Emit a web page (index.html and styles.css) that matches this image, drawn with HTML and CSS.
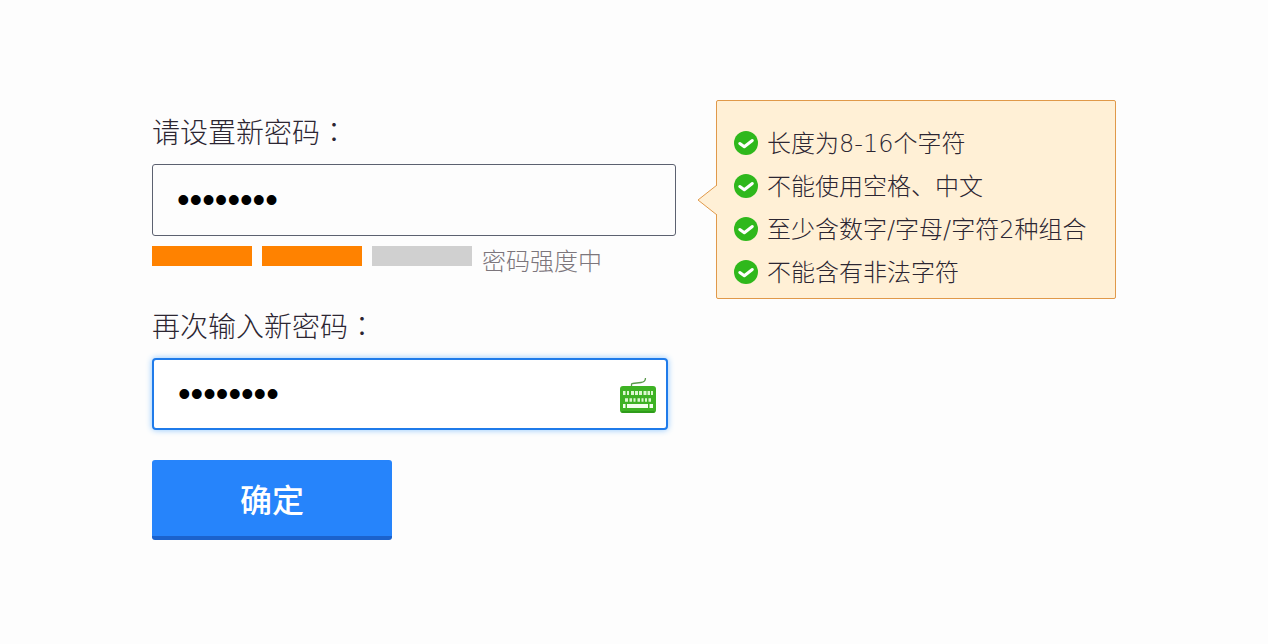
FILE: index.html
```html
<!DOCTYPE html>
<html lang="zh-CN">
<head>
    <meta charset="UTF-8">
    <meta name="viewport" content="width=device-width, initial-scale=1.0">
    <title>设置新密码</title>
    <link rel="stylesheet" href="styles.css">
</head>
<body>
    <!-- 对勾图标 -->
    <svg class="icon-defs" width="0" height="0" aria-hidden="true">
        <symbol id="check" viewBox="0 0 24 24">
            <circle cx="12" cy="12" r="12" fill="#2fb81c"/>
            <path d="M5.800 12.500L10.300 15.800L18.300 9.500" fill="none" stroke="#fff" stroke-width="3" stroke-linecap="round" stroke-linejoin="round"/>
        </symbol>
    </svg>
    <div class="container">
        <form class="password-form" id="passwordForm">
            <!-- 新密码 -->
            <div class="form-group">
                <label for="password">请设置新密码<span class="colon" lang="zh-TW">：</span></label>
                <input type="password" id="password" name="password" value="abcd1234">
                <div class="strength">
                    <span class="bar active"></span>
                    <span class="bar active"></span>
                    <span class="bar"></span>
                    <span class="strength-text">密码强度中</span>
                </div>
            </div>
            <!-- 确认密码 -->
            <div class="form-group">
                <label for="confirm">再次输入新密码<span class="colon" lang="zh-TW">：</span></label>
                <div class="input-box">
                    <input type="password" id="confirm" name="confirm" value="abcd1234">
                    <svg class="keyboard" viewBox="0 0 36 40" aria-hidden="true">
                        <path d="M11.500 13V10.500Q11.500 9.500 12.500 9.500L21 8.500Q25.500 8 25.500 4" fill="none" stroke="#5a9a4c" stroke-width="1.300"/>
                        <rect x="0" y="12" width="36" height="27" rx="3" fill="#3eb224"/>
                        <path d="M1.500 38h33" stroke="#2b9518" stroke-width="1.500"/>
                        <path d="M3 19h2.500M7 19h2M11 19h3M15 19h3M19 19h3M23.500 19h3M27.500 19h2.500M31 19h2" stroke="#dcf7cf" stroke-width="4"/>
                        <path d="M5 26h3M9.500 26h2.500M13.500 26h2M17.500 26h2.500M21.500 26h2M25 26h2M28.500 26h2.500" stroke="#dcf7cf" stroke-width="3.500"/>
                        <path d="M3 32h2.500M7 32h21M29.500 32h3.500" stroke="#f2ffec" stroke-width="4"/>
                    </svg>
                </div>
            </div>
            <button type="submit">确定</button>
        </form>
        <!-- 密码规则提示 -->
        <div class="tip">
            <svg class="arrow" viewBox="0 0 20 32" aria-hidden="true">
                <path d="M20 1L1 16L20 31" fill="#fff0d6" stroke="#e0994a"/>
            </svg>
            <ul>
                <li><svg class="check" aria-hidden="true"><use href="#check"/></svg>长度为8-16个字符</li>
                <li><svg class="check" aria-hidden="true"><use href="#check"/></svg>不能使用空格、中文</li>
                <li><svg class="check" aria-hidden="true"><use href="#check"/></svg>至少含数字/字母/字符2种组合</li>
                <li><svg class="check" aria-hidden="true"><use href="#check"/></svg>不能含有非法字符</li>
            </ul>
        </div>
    </div>
</body>
</html>
```
FILE: styles.css
```css
* {
    box-sizing: border-box;
}
body {
    margin: 0;
    background-color: #fdfdfd;
    color: #2c2632;
    font-family: "Noto Sans CJK SC", sans-serif;
    font-weight: 300;
}
.icon-defs {
    position: absolute;
}
.container {
    display: flex;
    align-items: flex-start;
    gap: 40px;
    padding: 100px 152px;
}
.password-form {
    flex: 0 1 524px;
    padding-top: 12px;
}
.form-group {
    margin-bottom: 30px;
}
.form-group label {
    display: block;
    margin-bottom: 14px;
    font-size: 28px;
    line-height: 38px;
}
.colon {
    font-family: "Noto Sans CJK TC", sans-serif;
}
.form-group input {
    display: block;
    width: 100%;
    height: 72px;
    padding: 0 24px;
    border: 1px solid #5c6170;
    border-radius: 3px;
    background-color: #fdfdfd;
    color: #000;
    font-family: "Liberation Sans", sans-serif;
    font-size: 36px;
    outline: none;
}
.strength {
    display: flex;
    gap: 10px;
    height: 30px;
    margin-top: 10px;
}
.strength .bar {
    width: 100px;
    height: 20px;
    background-color: #d0d0d0;
}
.strength .bar.active {
    background-color: #ff8200;
}
.strength-text {
    color: #7c767c;
    font-size: 24px;
    line-height: 28px;
}
.input-box {
    display: flex;
    align-items: center;
    margin-right: 8px;
    padding-right: 10px;
    border: 2px solid #1f7bea;
    border-radius: 4px;
    background-color: #fff;
    box-shadow: 0 0 6px #8cc6ff;
}
.form-group .input-box input {
    flex: 1;
    min-width: 0;
    height: 68px;
    border: none;
    background-color: transparent;
}
.keyboard {
    width: 36px;
    height: 40px;
}
button {
    width: 240px;
    height: 80px;
    border: none;
    border-bottom: 4px solid #1b62cc;
    border-radius: 3px;
    background-color: #2684fb;
    color: #fff;
    font-family: inherit;
    font-size: 32px;
    font-weight: 500;
    cursor: pointer;
}
.tip {
    position: relative;
    flex: 0 1 400px;
    padding: 22px 17px 3px;
    border: 1px solid #e0994a;
    border-radius: 2px;
    background-color: #fff0d6;
}
.tip .arrow {
    position: absolute;
    top: 83px;
    left: -20px;
    width: 20px;
    height: 32px;
}
.tip ul {
    margin: 0;
    padding: 0;
    list-style: none;
}
.tip li {
    display: flex;
    align-items: center;
    gap: 9px;
    font-family: "DejaVu Sans", "Noto Sans CJK SC", sans-serif;
    font-size: 24px;
    line-height: 43px;
}
.check {
    flex: none;
    width: 24px;
    height: 24px;
    margin-bottom: 4px;
}
```
